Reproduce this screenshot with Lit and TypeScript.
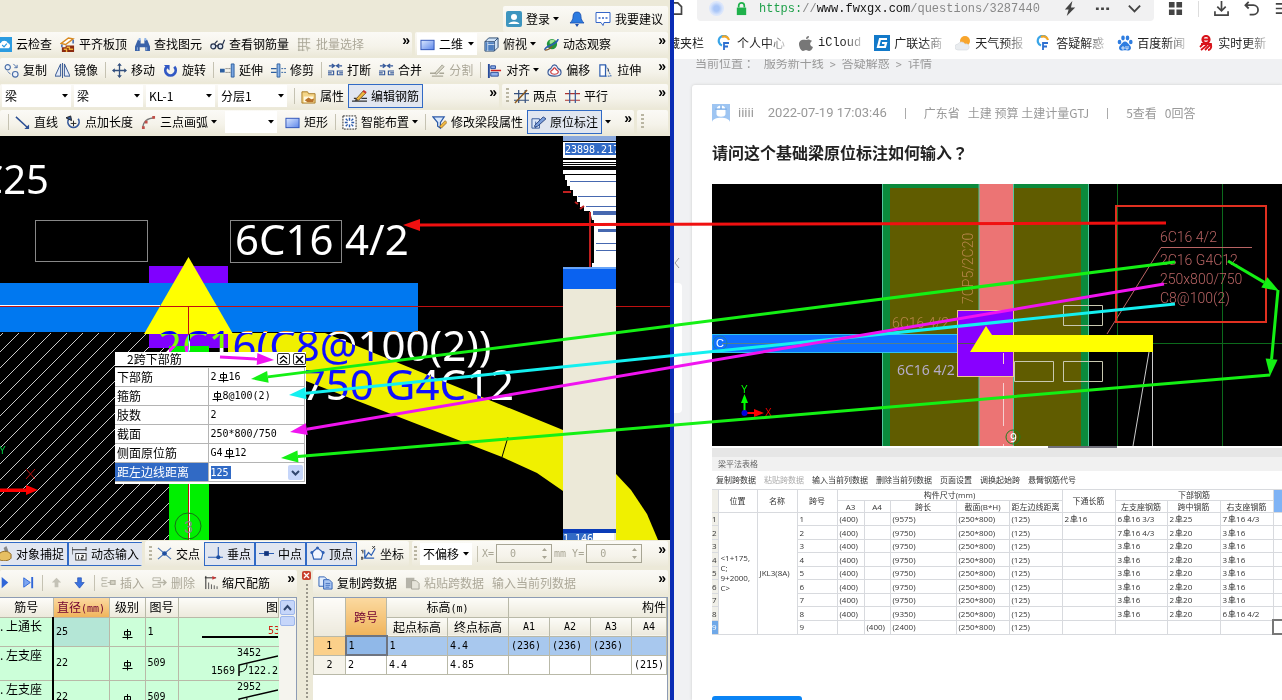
import { LitElement, html, svg, css, nothing } from "lit";
import { customElement } from "lit/decorators.js";
import { classMap } from "lit/directives/class-map.js";

const ICONS: Record<string, any> = {
  user: svg`<rect width="16" height="16" rx="2" fill="#3d95bf"/><circle cx="8" cy="6" r="3" fill="#fff"/><path d="M2.500 13c1-3.500 10-3.500 11 0z" fill="#fff"/>`,
  bell: svg`<path d="M8 1c3 0 4 2 4 5 0 2 1 4 3 6H1c2-2 3-4 3-6 0-3 1-5 4-5z" fill="#2c7be0" stroke="#1b4fae" stroke-width=".8"/><path d="M6 13h4l-2 3z" fill="#1b4fae"/>`,
  talk: svg`<path d="M1 1.500h14v10H9l-1 3-2-3H1z" fill="#fff" stroke="#3566c8"/><path d="M3.500 7h2M7 7h2M10.500 7h2" stroke="#3566c8" stroke-width="1.500"/>`,
  cloud: svg`<rect width="16" height="16" fill="#2b9be0"/><path d="M3 12a3 3 0 0 1 1-5.500 4 4 0 0 1 7.500 0A3 3 0 0 1 12.500 12z" fill="#fff"/><path d="M5.500 8.500l2 2 3-3.500" fill="none" stroke="#2b9be0" stroke-width="1.300"/>`,
  slab: svg`<path d="M1 7l8-6 5 1-8 6z" fill="#fff" stroke="#d98a20" stroke-width="1.500"/><path d="M2 11V8M14 3v4" stroke="#345aa8" stroke-width="1.500"/><path d="M2 11h4v-2h9v7H2z" fill="#8a2a10"/><path d="M7 11h3v2h4M4 13h3v3" stroke="#f2b43c" stroke-width="1.500" fill="none"/>`,
  find: svg`<path d="M3 3h3v4h4V3h3l3 7v5h-5v-4H5v4H0v-5z" fill="#3a62a8"/><path d="M4 1h2v3H4zM10 1h2v3h-2zM2 11h1v3H2zM12 11h1v3h-1z" fill="#8fb4e8"/>`,
  glasses: svg`<circle cx="3.500" cy="10" r="2.600" fill="#dfe8f4" stroke="#23304a" stroke-width="1.300"/><circle cx="11" cy="10" r="2.600" fill="#dfe8f4" stroke="#23304a" stroke-width="1.300"/><path d="M6 9.500h3M5 7l3-3M13.500 8l2-5" stroke="#23304a" stroke-width="1.200"/>`,
  batch: svg`<path d="M1 2h13M1 6h13M1 10h9M1 14h7M2 1v14M6 1v14M10 1v8" stroke="#aaa898" fill="none"/><path d="M9 9l6 3-3 1-1 3z" fill="#bdbbac"/>`,
  rect: svg`<defs><linearGradient id="rg" x2="1" y2="1"><stop stop-color="#dbe8ff"/><stop offset="1" stop-color="#5d86ea"/></linearGradient></defs><rect x="1" y="3.500" width="14" height="10" fill="url(#rg)" stroke="#2c52b8"/>`,
  cube: svg`<path d="M1 5l4-4h10v10l-4 4H1z" fill="#cfe2f6" stroke="#27466e"/><path d="M1 5h10v10M11 5l4-4" fill="none" stroke="#27466e"/><path d="M1.500 5.500h9v9h-9z" fill="#4d7fc0"/><path d="M4 15V5M4 8h7" stroke="#e8f0fa" stroke-width=".8"/>`,
  orbit: svg`<circle cx="8.500" cy="7.500" r="5.500" fill="#22963c"/><path d="M6 4c2-2 4-1 6 0-2 1-4 4-6 3z" fill="#a6e69a"/><path d="M1 14c-1-3 4-4 8-6s6-5 6-6" fill="none" stroke="#2b5fb0" stroke-width="1.600"/><path d="M1 14c3 0 6-2 8-4" stroke="#8a5a2a" fill="none" stroke-width="1.500"/>`,
  copy: svg`<circle cx="4" cy="4.500" r="2.800" fill="#eef3fb" stroke="#4a6ea8" stroke-width="1.200"/><circle cx="12" cy="12" r="3" fill="#eef3fb" stroke="#4a6ea8" stroke-width="1.200"/><path d="M10 1l4 4M14 2v3h-3M4 9l3 3" stroke="#4a6ea8" fill="none"/>`,
  mirror: svg`<path d="M6 1v13H0zM10 1v13h6z" fill="#e4ecfa" stroke="#31538f"/><path d="M8 0v16" stroke="#31538f"/>`,
  move: svg`<path d="M8 1v14M1 8h14" stroke="#34507e" stroke-width="1.400"/><path d="M8 0l2.500 3h-5zM8 16l2.500-3h-5zM0 8l3-2.500v5zM16 8l-3-2.500v5z" fill="#34507e"/>`,
  rotate: svg`<path d="M4 4a5.500 5.500 0 1 0 8 0" fill="none" stroke="#3158c4" stroke-width="3"/><path d="M1 2h6v6z" fill="#3158c4"/>`,
  extend: svg`<path d="M0 6h5v4H0z" fill="#2d5fa0"/><path d="M6 6h5M6 10h5" stroke="#444" stroke-dasharray="1 1"/><path d="M12 1h3v14h-3z" fill="#7aa6e0" stroke="#2d5fa0"/>`,
  trim: svg`<path d="M0 6h6M0 10h6" stroke="#2d5fa0" stroke-width="1.500"/><path d="M6.500 1h3v14h-3z" fill="#8db6ea" stroke="#2d5fa0"/><path d="M11 6h5M11 10h5" stroke="#2d5fa0" stroke-dasharray="2 1"/>`,
  breakk: svg`<path d="M1 3h5M10 3h5M4 1l3 2-3 2M12 1L9 3l3 2" stroke="#34589a" fill="none" stroke-width="1.300"/><path d="M0 8.500h6v4H0M16 8.500h-6v4h6M0 10.500h4M12 10.500h4" fill="none" stroke="#34589a" stroke-width="1.200"/>`,
  split: svg`<path d="M0 11h6M10 11h5M2 14h12" stroke="#aaa898" stroke-width="1.500"/><path d="M5 11l8-9 2 2-8 8z" fill="#d8d6c8" stroke="#a09e8e"/>`,
  align: svg`<path d="M2 1v15" stroke="#274b9a" stroke-width="2"/><path d="M4 3h5v3H4zM4 10h8v4H4z" fill="#8fb0ea" stroke="#274b9a"/><path d="M4 8h11" stroke="#c22" stroke-width="1.500"/>`,
  offset: svg`<path d="M8 2c3 0 3 3 4 4 3 1 3 3 3 4 0 3-3 4-7 4s-7-1-7-4c0-1 0-3 3-4 1-1 1-4 4-4z" fill="#e8eefa" stroke="#3c5c98" stroke-width="1.200"/><path d="M8 5c1 0 1 2 3 3 2 1 1 4-3 4s-5-3-3-4c2-1 2-3 3-3z" fill="#fff" stroke="#c33" stroke-width="1.200"/>`,
  stretch: svg`<path d="M2 2h6v12H2z" fill="#fff" stroke="#3060b0" stroke-width="1.300"/><path d="M8 2l6 12H8" fill="none" stroke="#3060b0" stroke-dasharray="2 1"/><path d="M11 6v3" stroke="#333"/>`,
  props: svg`<path d="M1 3h6l1 2h7v10H1z" fill="#f4d588" stroke="#a87a22"/><path d="M3 8h10v6H3z" fill="#fff8e0"/><path d="M4 12l4-3 3 2 3-1-1 4H7z" fill="#b8722a"/>`,
  edit: svg`<path d="M0 13h16M2 10h3M10 10h6" stroke="#333" stroke-width="1.300"/><path d="M4 11l8-9 3 2-8 8z" fill="#f0b840" stroke="#7a5520"/><path d="M4 11l3 1-4 1z" fill="#333"/><path d="M12 2l3 2" stroke="#c33" stroke-width="2"/>`,
  grid2: svg`<path d="M0 5h16M0 12h16M5 1v14M12 1v14" stroke="#34507e" stroke-width="1.300"/><path d="M1 15L14 1" stroke="#8a5a20" stroke-width="1.500"/>`,
  grid3: svg`<path d="M0 5h16M0 12h16" stroke="#a33" stroke-width="1.300"/><path d="M5 1v14M11 1v14" stroke="#34589a" stroke-width="1.300"/>`,
  line: svg`<path d="M1 2l12 11" stroke="#2c4f94" stroke-width="1.600"/><path d="M15 15v-5l-5 5z" fill="#2c4f94"/>`,
  addlen: svg`<path d="M3 4a6 6 0 1 0 10 0" fill="none" stroke="#34589a" stroke-width="1.800"/><path d="M0 3l5-2 1 5zM8 6v6M5 9h6" stroke="#222" fill="#34589a"/>`,
  arc: svg`<path d="M2 14C2 7 7 3 14 3" fill="none" stroke="#777" stroke-width="1.400"/><path d="M1 12h3v3H1zM4 6h3v3H4zM12 1h3v3h-3z" fill="#c0504a"/>`,
  smart: svg`<rect x="1" y="1" width="14" height="14" fill="#fff" stroke="#222" stroke-dasharray="2 1"/><path d="M8 3v3M8 10v3M3 8h3M10 8h3M4 4l2 2M12 12l-2-2M12 4l-2 2M4 12l2-2" stroke="#2c5aa8" stroke-width="1.500"/>`,
  modify: svg`<path d="M1 2h12L9 8v6l-3-2V8z" fill="#d9e8fc" stroke="#2c5aa8" stroke-width="1.300"/><path d="M8 12l6-6 2 2-6 6z" fill="#f0b840" stroke="#7a5520" stroke-width=".7"/>`,
  label: svg`<path d="M1 4h8v10H1zM5 7v7" fill="#dbe6f8" stroke="#34589a"/><path d="M4 11l9-9 3 2-9 8-3 1z" fill="#7da0dc" stroke="#2b4580"/>`,
  snap: svg`<path d="M7 2l3-2 2 5-3 2z" fill="#888"/><path d="M2 9c2-4 10-5 13 0v4c-2 3-10 4-13 1z" fill="#e6bf62" stroke="#8a6420"/>`,
  dyn: svg`<path d="M0 1v8M15 1v4M0 4h15" stroke="#333" stroke-width="1.200"/><rect x="4" y="8" width="11" height="7" fill="#fff" stroke="#333"/><path d="M7 10v4M10 10h2v2h-2v2h2" stroke="#111" fill="none"/>`,
  cross: svg`<path d="M1 2l14 12M15 2L1 14" stroke="#4f78b8" stroke-width="1.300"/><circle cx="8" cy="8" r="2.500" fill="#1e4fa0"/>`,
  perp: svg`<path d="M0 12h16M11 1v11" stroke="#2d5fb4" stroke-width="1.300"/><circle cx="11" cy="12" r="2.200" fill="#1e4fa0"/>`,
  mid: svg`<path d="M0 8h16" stroke="#2d5fb4" stroke-width="1.300"/><rect x="5.500" y="5.500" width="5" height="5" fill="#12357c"/>`,
  vertex: svg`<path d="M8 2l6 5-2 7H4L2 7z" fill="#f2f6ff" stroke="#2d5fb4" stroke-width="1.300"/><circle cx="8" cy="2" r="1.600" fill="#2d5fb4"/><circle cx="2" cy="7" r="1.600" fill="#2d5fb4"/><circle cx="14" cy="7" r="1.600" fill="#2d5fb4"/>`,
  coord: svg`<path d="M4 4v9h10M4 13l4-6 3 3 4-7" fill="none" stroke="#2d5fb4" stroke-width="1.300"/><path d="M0 4l2 2M2 4v4M12 0l3 3M15 0l-3 3M0 12h2v2H0z" stroke="#333" fill="none"/>`,
  play: svg`<path d="M5 2l7 6-7 6z" fill="#2f66d8"/>`,
  last: svg`<path d="M4 3l7 5-7 5z" fill="#7da6f0" stroke="#2f66d8"/><path d="M13 2v12" stroke="#2f66d8" stroke-width="2"/>`,
  up: svg`<path d="M8 3l5 5h-3v5H6V8H3z" fill="#c4c2b6"/>`,
  down: svg`<path d="M8 14l5-6h-3V3H6v5H3z" fill="#3a72e0" stroke="#2450b0" stroke-width=".7"/>`,
  insert: svg`<path d="M1 3h6M1 12h6M1 3v3h5M1 12V9h5" stroke="#b5b3a5" fill="none"/><path d="M7 8h4M10 6h5v4h-5z" stroke="#b5b3a5" fill="#d8d6c8" stroke-width="1.300"/>`,
  del: svg`<path d="M1 3h8v3H1zM1 10h8v3H1z" stroke="#b5b3a5" fill="none"/><path d="M6 8h9M12 5l3 3-3 3" stroke="#b5b3a5" fill="none" stroke-width="1.500"/>`,
  scale: svg`<path d="M3 1v14M2 3h12" stroke="#222"/><path d="M14 3l-4-2v4z" fill="#c33"/><path d="M6 15v-7M9 15v-5M12 15v-4M15 15v-3" stroke="#555"/>`,
  pages: svg`<path d="M1 2h6l3 3v7H1z" fill="#e4eefc" stroke="#2d5fb4"/><path d="M6 5h6l3 3v7H6z" fill="#a9c6f2" stroke="#2d5fb4"/><path d="M8 9h5M8 11h5M8 13h4" stroke="#2d5fb4" stroke-width=".8"/>`,
  paste: svg`<path d="M1 3h9v11H1z" fill="#b5b3a9"/><path d="M7 6h5l3 3v6H7z" fill="#e6e4da" stroke="#a5a397"/>`,
  serve: svg`<path d="M10.500 2.500a5 5 0 1 0-5.500 8" fill="none" stroke="#39a5e8" stroke-width="2.200"/><path d="M5 2c3-1.500 6 0 7 3" stroke="#f5a623" stroke-width="2.200" fill="none"/><path d="M7 15V8h5M7 11.500h4" stroke="#2d6fd0" stroke-width="1.800" fill="none"/>`,
  apple: svg`<path d="M11 1c0 2-1 3-3 3 0-2 1-3 3-3zM8 5c1 0 2-1 4 0 1 0 2 1 2 1-3 2-2 5 1 6-1 3-3 4-4 4s-2-1-3-1-2 1-3 1c-2 0-4-4-4-7 0-4 4-5 7-4z" fill="#777"/>`,
  gld: svg`<rect width="16" height="16" fill="#1279c9"/><path d="M13 4H6L4 12h7l1-4H8" fill="none" stroke="#fff" stroke-width="2.200"/>`,
  weather: svg`<circle cx="10" cy="6" r="5" fill="#f8a52c"/><path d="M3 15a3 3 0 0 1 0-6 4 4 0 0 1 7 0 3 3 0 0 1 2 6z" fill="#e9ecef" stroke="#d5d9de" stroke-width=".6"/>`,
  baidu: svg`<g fill="#2f7de0"><ellipse cx="2.500" cy="7" rx="1.800" ry="2.300"/><ellipse cx="6" cy="3" rx="1.800" ry="2.400"/><ellipse cx="10.500" cy="3" rx="1.800" ry="2.400"/><ellipse cx="13.800" cy="7" rx="1.800" ry="2.300"/><path d="M8 6.500c2 0 3 2 4.500 3.500 3 3 1 6-2 5.500-2-.4-3-.4-5 0-3 .500-5-2.500-2-5.500C5 8.500 6 6.500 8 6.500z"/></g><path d="M5 12h2v2H5zM9 11v3h2v-3" fill="none" stroke="#fff" stroke-width=".8"/>`,
  yi: svg`<circle cx="8" cy="4.500" r="3.500" fill="none" stroke="#d8131a" stroke-width="2.200"/><path d="M5 4.500h6M3 9h10c1 4-1 6-3 6M9 10l-6 5M12 10l-5 5M5 9l-3 3" fill="none" stroke="#d8131a" stroke-width="1.800"/>`,
  face: svg`<rect width="16" height="16" fill="#9ec5f2"/><path d="M4 5c0-5 8-5 8 0v4c0 3-8 3-8 0zM0 16c1-5 15-5 16 0z" fill="#fff"/><path d="M3 4.500h10M8 1v3" stroke="#6fa6e6" stroke-width="1.200"/>`,
  home: svg`<path d="M0 2h4l4 4v8H0" fill="none" stroke="#444" stroke-width="1.800"/>`,
  bolt: svg`<path d="M10 0L2 9h4l-2 7 9-9H8.500z" fill="#444"/>`,
  dots: svg`<path d="M1 7h3v2.500H1zM6.500 7h3v2.500h-3zM12 7h3v2.500h-3z" fill="#444"/>`,
  chev: svg`<path d="M2 5l6 6 6-6" fill="none" stroke="#444" stroke-width="2"/>`,
  apps: svg`<path d="M1 1h6v6H1zM9 1h6v6H9zM1 9h6v6H1zM9 9h6v6H9z" fill="#444"/>`,
  dl: svg`<path d="M8 0v10M3.500 6L8 10.500 12.500 6M1 11v4h14v-4" fill="none" stroke="#444" stroke-width="1.800"/>`,
  undo: svg`<path d="M5 1L1.500 4.500 5 8M2 4.500h8a4.500 4.500 0 0 1 0 10H6" fill="none" stroke="#444" stroke-width="1.900"/>`,
  menu: svg`<path d="M3 3h14M3 8h14M3 13h14" stroke="#444" stroke-width="1.800"/>`,
  lock: svg`<path d="M3 7h10v8H3z" fill="#1fb14b"/><path d="M5 7V5a3 3 0 0 1 6 0v2" fill="none" stroke="#1fb14b" stroke-width="1.800"/>`,
};

const icon = (name: string) =>
  html`<svg class="ic" viewBox="0 0 16 16" aria-hidden="true">${ICONS[name]}</svg>`;
const caret = html`<svg class="caret" viewBox="0 0 6 4" aria-hidden="true"><path d="M0 0h6L3 3.500z" fill="#000" /></svg>`;
const tool = (name: string, text: string, o: { on?: boolean; off?: boolean; drop?: boolean } = {}) => html`<button
  class=${classMap({ tool: true, on: !!o.on })}
  ?disabled=${!!o.off}
  aria-label=${text || name}
>${name ? icon(name) : nothing}${text ? html`<span>${text}</span>` : nothing}${o.drop ? caret : nothing}</button>`;
const sep = html`<i class="sep"></i>`;
const grip = html`<i class="grip"></i>`;
const more = html`<button class="more" aria-label="更多">»</button>`;
const combo = (label: string, value: string, cls = "", ic = "") => html`<label class="combo ${cls}">${ic ? icon(ic) : nothing}<select aria-label=${label}><option>${value}</option></select>${caret}</label>`;

const rebar = html`<svg class="rb" viewBox="0 0 12 12" aria-label="HRB400"><path d="M6.500 1v10.500M3.500 3.500h6v3.500h-6zM1.500 9.500h10" fill="none" stroke="currentColor" /></svg>`;
const withBar = (s: string) => {
  const [a, b] = s.split("Φ");
  return b === undefined ? a : html`${a}${rebar}${b}`;
};

const POPUP = [
  ["下部筋", "2Φ16"],
  ["箍筋", "Φ8@100(2)"],
  ["肢数", "2"],
  ["截面", "250*800/750"],
  ["侧面原位筋", "G4Φ12"],
];

const BOOKMARKS = [
  ["serve", "个人中心"],
  ["apple", "iCloud"],
  ["gld", "广联达商"],
  ["weather", "天气预报"],
  ["serve", "答疑解惑"],
  ["baidu", "百度新闻"],
  ["yi", "实时更新"],
];

const SPANS = [
  ["(400)", "", "(9575)", "2Φ16", "6Φ16 3/3", "2Φ25", "7Φ16 4/3"],
  ["(400)", "", "(9750)", "", "7Φ16 4/3", "2Φ20", "3Φ16"],
  ["(400)", "", "(9750)", "", "3Φ16", "2Φ20", "3Φ16"],
  ["(400)", "", "(9750)", "", "3Φ16", "2Φ20", "3Φ16"],
  ["(400)", "", "(9750)", "", "3Φ16", "2Φ20", "3Φ16"],
  ["(400)", "", "(9750)", "", "3Φ16", "2Φ20", "3Φ16"],
  ["(400)", "", "(9750)", "", "3Φ16", "2Φ20", "3Φ16"],
  ["(400)", "", "(9350)", "", "3Φ16", "2Φ20", "6Φ16 4/2"],
  ["", "(400)", "(2400)", "", "", "", ""],
];

@customElement("app-root")
export class AppRoot extends LitElement {
  static styles = css`
    :host { display: block; font: 12px/16px "Noto Sans CJK SC", sans-serif; color: #000; }
    * { box-sizing: border-box; }
    button, select, input { font: inherit; color: inherit; border: 0; background: none; margin: 0; padding: 0; border-radius: 0; }
    table { border-collapse: collapse; table-layout: fixed; }
    th { font-weight: 400; }
    .screen { position: relative; display: grid; grid-template-columns: minmax(0, 674fr) minmax(0, 608fr); height: 100vh; min-height: 700px; overflow: hidden; background: #fff; }
    .links { position: absolute; inset: 0; width: 100%; height: 100%; pointer-events: none; }

    .cad { display: flex; flex-direction: column; min-width: 0; min-height: 0; background: #ece9d8; border-right: 4px solid #0a3fd4; border-image: linear-gradient(90deg, #0a2cb4, #0a54e6 50%, #0a2cb4) 1; overflow: hidden; }
    .top { display: flex; justify-content: flex-end; padding: 6px 2px 0 0; height: 32px; }
    .top .account { gap: 10px; background: linear-gradient(#fbfaf6, #f1efe4); padding: 0 5px 0 3px; }
    .account .ic { width: 16px; height: 16px; }
    .row { display: grid; gap: 0 3px; height: 26px; padding: 0 2px 2px 0; }
    .r1 { grid-template-columns: 412fr 253fr; }
    .r2 { grid-template-columns: 1fr; }
    .r3 { grid-template-columns: 499fr 166fr; }
    .r4 { grid-template-columns: 634fr 31fr; }
    .r5 { grid-template-columns: 142fr 264fr 256fr; height: 30px; padding: 1px 2px 4px 0; }
    .bar { display: flex; align-items: center; gap: 8px; min-width: 0; overflow: hidden; white-space: nowrap; background: linear-gradient(#fbfaf6, #f5f3ea 60%, #ece9da); border-radius: 2px; }
    .cut { padding-left: 0; }
    .cut > :first-child { margin-left: -3px; }
    .cut > .on:first-child { margin-left: -7px; }
    .p2 { padding-left: 2px; }
    .p4 { padding-left: 4px; }
    .p9 { padding-left: 9px; }
    .tool { display: flex; align-items: center; gap: 4px; height: 24px; flex: none; line-height: 22px; }
    .tool:disabled { color: #aca899; }
    .on { border: 1px solid #316ac5; background: #e1e6f0; padding: 0 3px; margin: 0 -4px; }
    .ic { width: 15px; height: 15px; flex: none; display: block; }
    .caret { width: 6px; height: 4px; flex: none; margin-left: -1px; }
    .sep { width: 1px; height: 16px; background: #c5c2b2; margin: 0 -2px 0 -1px; flex: none; }
    .grip { width: 3px; height: 16px; margin-right: -3px; flex: none; background: repeating-linear-gradient(#b9b5a2 0 2px, transparent 2px 4px); }
    .more { margin-left: auto; align-self: flex-start; font: bold 14px/16px "Liberation Sans", sans-serif; flex: none; padding-right: 2px; }
    .combo { display: flex; align-items: center; gap: 4px; height: 22px; width: 69px; background: #fff; padding: 0 3px; flex: none; }
    .combo:has(+ .combo) { margin-right: -5px; }
    .combo select { appearance: none; flex: 1; min-width: 0; outline: 0; line-height: 20px; }
    .combo.short { width: 52px; }
    .combo.view { width: 60px; margin-right: -1px; }
    .field { display: flex; align-items: center; gap: 2px; flex: none; color: #a9a695; font: 10px/16px "DejaVu Sans Mono", monospace; }
    .spin { display: flex; align-items: center; width: 56px; height: 19px; border: 1px solid #a7a594; padding-right: 3px; }
    .spin input { flex: 1; width: 20px; text-align: right; padding-right: 10px; appearance: textfield; }
    .spin svg { width: 7px; height: 13px; flex: none; }
    .offsets { gap: 6px; }

    .view3d { position: relative; flex: 1 1 404px; min-height: 0; background: #000; overflow: hidden; }
    .draw { display: block; width: 100%; height: 100%; }
    .big { font: 42px "Noto Sans", sans-serif; fill: #fff; }
    .note { font: 40px "Noto Sans", sans-serif; fill: #fff; }
    .xor { mix-blend-mode: difference; }
    .popup { position: absolute; left: 115px; top: 216px; width: 191px; background: #fff; padding-bottom: 2px; }
    .cap { display: flex; align-items: center; gap: 3px; height: 15px; padding: 0 0 0 12px; border-bottom: 1px solid #000; line-height: 14px; }
    .cap span { flex: 1; }
    .cap button { width: 13px; height: 12px; border: 1px solid #333; border-radius: 2px; display: grid; place-items: center; }
    .cap svg { width: 9px; height: 9px; }
    .popup table { width: 190px; }
    .popup th, .popup td { border: 1px solid #b4b4b4; height: 19px; padding: 0 0 0 2px; text-align: left; line-height: 16px; white-space: nowrap; }
    .popup th { width: 93px; border-left: 0; }
    .popup td { font: 10px/16px "DejaVu Sans Mono", "Noto Sans CJK SC", monospace; }
    .popup .sel { background: #316ac5; color: #fff; }
    .pick { display: flex; align-items: center; padding-right: 1px; }
    .pick select { appearance: none; background: #316ac5; color: #fff; width: 20px; height: 13px; line-height: 13px; }
    .pick svg { width: 15px; height: 15px; margin-left: auto; }
    .rb { width: 12px; height: 12px; vertical-align: -3px; }

    .panes { flex: 0 0 130px; display: grid; grid-template-columns: 297fr 16px 355fr; padding-right: 2px; min-height: 0; overflow: hidden; }
    .pane { display: flex; flex-direction: column; min-width: 0; min-height: 0; overflow: hidden; }
    .pane > .bar { height: 25px; flex: none; margin-bottom: 2px; }
    .p5 { padding-left: 5px; }
    .split { display: flex; flex-direction: column; align-items: flex-end; gap: 4px; padding: 1px 2px 0 0; }
    .shut { width: 9px; height: 9px; background: #c8402c; border-radius: 2px; color: #fff; display: grid; place-items: center; }
    .shut svg { width: 7px; height: 7px; }
    .dots { flex: 1; width: 2px; margin-right: 3px; background: repeating-linear-gradient(#99968a 0 2px, transparent 2px 4px); }
    .sheet { flex: 1; display: flex; border-top: 1px solid #8c9bb4; border-right: 1px solid #8c9bb4; background: #fff; overflow: hidden; align-items: flex-start; }
    .scroll { width: 17px; align-self: stretch; flex: none; padding: 2px 1px; display: grid; align-content: start; gap: 1px; background: #f5f4ee; }
    .scroll button { height: 15px; border: 1px solid #9db6ea; background: #c6d6fa; border-radius: 2px; display: grid; place-items: center; }
    .scroll .thumb { height: 10px; }
    .scroll svg { width: 9px; height: 7px; }
    .bars { width: 100%; flex: 1; min-width: 0; }
    .bars th, .bars td, .spans th, .spans td { border: 1px solid #b9b9a8; border-top: 0; padding: 0 0 0 2px; overflow: hidden; white-space: nowrap; }
    .bars th, .spans th { background: linear-gradient(#fdfcf8, #ece9dc); height: 19px; text-align: center; padding: 0; }
    .bars td { background: #ccffd9; height: 34px; }
    .bars .first td { height: 29px; }
    .bars td:first-child, .bars th:first-child { border-left: 0; }
    .bars td:last-child { border-right: 0; padding: 0; }
    .bars .name { vertical-align: top; border-right: 2px solid #000; padding: 0; }
    .bars .mid { text-align: center; padding: 0; }
    .bars .here { background: #b4e6d6; }
    .bars .hot, .spans .hot { background: linear-gradient(#fbd9a0, #f0b45c); color: #700030; }
    .bars .cutoff { text-align: right; }
    .fig { display: block; }
    .num { font: 10px/14px "DejaVu Sans Mono", monospace; }
    .spans { width: 100%; }
    .spans td { height: 19px; font: 10px/14px "DejaVu Sans Mono", monospace; }
    .spans .lit td { background: #a8c8ee; }
    .spans .lit .cur { background: #90b8e8; border: 2px solid #6e7480; }
    .spans .idx { text-align: center; background: #f5f3ea; padding: 0; }
    .spans .lit .idx { background: #fbd08a; }
    .spans .rt { text-align: right; }

    .web { display: flex; flex-direction: column; min-width: 0; min-height: 0; overflow: hidden; background: #f0f1f3; }
    .chrome { background: #fff; height: 59px; flex: none; overflow: hidden; }
    .address { display: flex; align-items: flex-start; gap: 14px; height: 32px; }
    .url { display: flex; align-items: center; gap: 10px; flex: 1; min-width: 0; height: 21px; padding: 0 12px 4px 12px; background: #f1f1f2; border-radius: 0 0 4px 4px; }
    .link { flex: 1; font: 12px/16px "Liberation Mono", monospace; color: #888; white-space: nowrap; text-decoration: none; }
    .link b { font-weight: 400; color: #111; }
    .link em { font-style: normal; color: #1fa04a; }
    .globe { width: 15px; height: 15px; flex: none; border-radius: 50%; background: radial-gradient(#a9c6f8 25%, #dbe6fb 60%); }
    .acts { display: flex; gap: 17px; align-items: center; }
    .nav { display: flex; gap: 15px; flex: none; padding-top: 1px; }
    .rule { width: 1px; height: 16px; background: #ddd; }
    .home { width: 9px; flex: none; overflow: hidden; padding-top: 1px; }
    .marks { display: flex; gap: 13px; align-items: center; height: 22px; white-space: nowrap; color: #222; }
    .marks a { display: flex; align-items: center; gap: 4px; color: inherit; text-decoration: none; flex: none; }
    .marks .ic { width: 16px; height: 16px; }
    .marks a span { -webkit-mask-image: linear-gradient(90deg, #000 60%, #0004); mask-image: linear-gradient(90deg, #000 60%, #0004); }
    .latin { font: 12px/16px "Liberation Mono", monospace; }
    .marks .fav { width: 30px; overflow: hidden; justify-content: flex-end; }
    .page { flex: 1; min-height: 0; display: grid; grid-template-columns: 18px minmax(0, 1fr); grid-template-rows: 26px minmax(0, 1fr); overflow: hidden; }
    .crumb { grid-column: 1 / -1; padding-left: 21px; margin-top: -6px; height: 20px; color: #999; white-space: pre; line-height: 20px; overflow: hidden; clip-path: inset(6px 0 0 0); }
    .rail { padding-top: 172px; }
    .rail svg { display: block; width: 6px; height: 12px; }
    .rail div { width: 8px; height: 130px; margin-top: 14px; background: #fff; border-radius: 0 4px 4px 0; }
    .card { background: #fff; padding: 18px 0 0 20px; border-radius: 3px 0 0 0; box-shadow: 0 0 3px #ccc; overflow: hidden; display: flex; flex-direction: column; }
    .card > * { flex: none; }
    .meta { display: flex; align-items: center; height: 20px; gap: 8px; color: #999; white-space: nowrap; }
    .meta .ic { width: 18px; height: 18px; }
    .meta i { width: 1px; height: 11px; background: #aaa; margin: 0 10px; }
    .meta .lat { font: 13px/16px Roboto, sans-serif; }
    .meta .who { padding-right: 6px; }
    h1 { font-size: 16px; line-height: 24px; font-weight: 700; color: #222; margin: 17px 0 20px; white-space: nowrap; }
    .ask { font-family: "Noto Sans CJK TC", sans-serif; }
    .photo { display: block; width: 100%; aspect-ratio: 570 / 262; background: #000; }
    .thin { font: 300 14px Roboto, sans-serif; fill: #b96464; }
    .shot { font-size: 8px; line-height: 10px; color: #333; }
    .knob { width: 12%; height: 2px; margin-left: 59%; background: #70707a; }
    .strip { height: 9px; background: #e6e6e6; }
    .tab { height: 14px; padding: 2px 6px; background: #f1f1f1; color: #666; }
    .cmds { display: flex; gap: 8px; height: 18px; align-items: center; padding-left: 4px; white-space: nowrap; }
    .cmds button { line-height: 10px; flex: none; }
    .cmds button:disabled { color: #aaa; }
    .grid { width: 571px; height: 146px; }
    .grid th, .grid td { border: 1px solid #d8dade; padding: 0 0 0 2px; height: 13px; overflow: hidden; white-space: nowrap; font-family: "Open Sans", "Noto Sans CJK SC", sans-serif; line-height: 10px; text-align: left; }
    .grid th { text-align: center; padding: 0; height: 11px; }
    .grid .no { background: #f0efe8; padding: 0; border-left: 0; }
    .grid .now { background: #6fa8e8; color: #fff; }
    .grid .wrap { white-space: normal; }
    .grid .blue { background: #7fb3f5; }
    .grid .box { border: 2px solid #777; border-right: 0; }
    .grid .rb { width: 9px; height: 9px; vertical-align: -1px; }
    .go { width: 90px; height: 32px; margin-top: 61px; background: #0a84f5; border-radius: 3px; color: #fff; }
  `;

  private cadTools() {
    return html`
      <div class="top">
        <div class="bar account">
          ${tool("user", "登录", { drop: true })}${tool("bell", "")}${tool("talk", "我要建议")}
        </div>
      </div>
      <div class="row r1">
        <div class="bar cut">
          ${tool("cloud", "云检查")}${tool("slab", "平齐板顶")}${tool("find", "查找图元")}${tool("glasses", "查看钢筋量")}${tool("batch", "批量选择", { off: true })}${more}
        </div>
        <div class="bar p2">
          ${combo("视图", "二维", "view", "rect")}${tool("cube", "俯视", { drop: true })}${tool("orbit", "动态观察")}${more}
        </div>
      </div>
      <div class="row r2">
        <div class="bar p4">
          ${tool("copy", "复制")}${tool("mirror", "镜像")}${sep}${tool("move", "移动")}${tool("rotate", "旋转")}${sep}${tool("extend", "延伸")}${tool("trim", "修剪")}${sep}${tool("breakk", "打断")}${tool("breakk", "合并")}${tool("split", "分割", { off: true })}${sep}${tool("align", "对齐", { drop: true })}${tool("offset", "偏移")}${tool("stretch", "拉伸")}${more}
        </div>
      </div>
      <div class="row r3">
        <div class="bar p2">
          ${combo("构件类型", "梁")}${combo("构件", "梁")}${combo("名称", "KL-1")}${combo("分层", "分层1")}${sep}${tool("props", "属性")}${tool("edit", "编辑钢筋", { on: true })}${more}
        </div>
        <div class="bar p4">${grip}${tool("grid2", "两点")}${tool("grid3", "平行")}${more}</div>
      </div>
      <div class="row r4">
        <div class="bar p9">
          ${sep}${tool("line", "直线")}${tool("addlen", "点加长度")}${tool("arc", "三点画弧", { drop: true })}${combo("绘制方式", "", "short")}${tool("rect", "矩形")}${sep}${tool("smart", "智能布置", { drop: true })}${sep}${tool("modify", "修改梁段属性")}${tool("label", "原位标注", { on: true })}<button class="tool" aria-label="展开">${caret}</button>${more}
        </div>
        <div class="bar p4">${grip}</div>
      </div>
    `;
  }

  private scene() {
    const rungs = [0, 1, 2, 3, 4];
    return html`
      <svg class="draw" viewBox="0 136 670 404" preserveAspectRatio="xMinYMin slice">
        <defs>
          <pattern id="hatch" width="16" height="16" patternUnits="userSpaceOnUse">
            <path d="M-1 17L17 -1" stroke="#c8c8c8" />
          </pattern>
          <clipPath id="column"><path d="M563 136H616V540H563z" /></clipPath>
        </defs>
        <rect y="136" width="670" height="404" fill="#000" />
        <rect y="333" width="169" height="207" fill="url(#hatch)" />
        <rect x="149" y="266" width="79" height="82" fill="#8000ff" />
        <rect y="283" width="418" height="49" fill="#0078f0" />
        <path d="M228 333H325L563 430V491L537 473L502 457L306 381L228 352z" fill="#f0f000" />
        <path d="M616 474L631 490L647 514L658 540H616z" fill="#f0f000" />
        <path d="M508 437L502 457" stroke="#000" />
        <rect x="169" y="346" width="40" height="194" fill="#00f000" />
        <path d="M188.500 257L144 334H233z" fill="#ff0" />
        <path d="M0 305.500H160" stroke="#fff" />
        <path d="M0 306.500H670M188.500 306V540" stroke="#c01010" />
        <path d="M189.500 334V540" stroke="#fff" />
        <rect x="35.500" y="220.500" width="112" height="41" fill="none" stroke="#888" />
        <rect x="230.500" y="220.500" width="111" height="42" fill="none" stroke="#888" />
        <circle cx="188" cy="526" r="13" fill="none" stroke="#187018" />
        <text x="184" y="533" font-family="Liberation Sans" font-size="16" fill="#888">3</text>
        <text class="note" x="49" y="194" text-anchor="end">C25</text>
        <text class="big" x="235" y="255">6C16</text>
        <text class="big" x="345" y="255">4/2</text>
        <text class="big xor" x="158" y="361">2C16(C8@100(2))</text>
        <text class="big xor" x="514" y="400" text-anchor="end">750 G4C12</text>
        <text x="-1" y="454" font-family="Liberation Sans" font-size="10" fill="#0c4">Y</text>
        <path d="M26 469L35 479M35 469L26 479" stroke="#c01010" />
        <path d="M0 488.500H26V485L38 490L26 495V492H0z" fill="#f00" />
        <g clip-path="url(#column)">
          <path d="M563 136H616V540H563z" fill="#ece9d8" />
          <path d="M563 136H616V268H563z" fill="#000" />
          <path d="M563 136H616V141H563z" fill="#8aa8dc" />
          <path d="M563 142H616V158H563z" fill="#fff" />
          <path d="M565 143H616V155H565z" fill="#316ac5" />
          <text x="565" y="153" font-family="DejaVu Sans Mono" font-size="10" fill="#fff">23898.217</text>
          <path d="M563 160H616V162H563zM563 163h53v1h-53zM563 165h53v1h-53zM563 170h53v4h-53z" fill="#fff" />
          <path d="M565 175H616V267H592V263H594V220H592L590 211H584V207H580V202H577V196H573V190H570V186H567V180H565z" fill="#fff" />
          ${rungs.map((i) => svg`<path d="M${[570, 578, 586, 596, 596][i]} ${[181, 196, 206, 243, 250][i]}.500H616" stroke="#4668b0"/>`)}
          <path d="M593 211h23v4h-23zM598 229h18v3h-18z" fill="#4668b0" />
          <path d="M590 212V267M563 192h8M575 202l3 2M580 209l4-3" stroke="#c02020" stroke-width="2" />
          <path d="M563 267H616V289H563z" fill="#0a62f0" />
          <path d="M563 267H616V269H563z" fill="#68a4f8" />
          <path d="M563 529H616V533H563z" fill="#0a3cb8" />
          <path d="M563 533H593V540H563z" fill="#316ac5" />
          <path d="M593 533H614V540H593z" fill="#fff" />
          <text x="563" y="542" font-family="DejaVu Sans Mono" font-size="10" fill="#fff">1 146</text>
        </g>
      </svg>
      <section class="popup">
        <header class="cap">
          <span>2跨下部筋</span>
          <button aria-label="收起"><svg viewBox="0 0 9 9"><path d="M1 4l3.500-3L8 4M1 8l3.500-3L8 8" fill="none" stroke="#000" stroke-width="1.300" /></svg></button>
          <button aria-label="关闭"><svg viewBox="0 0 9 9"><path d="M1 1l7 7M8 1L1 8" stroke="#000" stroke-width="1.500" /></svg></button>
        </header>
        <table>
          ${POPUP.map(([k, v]) => html`<tr><th scope="row">${k}</th><td>${withBar(v)}</td></tr>`)}
          <tr>
            <th scope="row" class="sel">距左边线距离</th>
            <td><div class="pick"><select aria-label="距左边线距离"><option>125</option></select><svg viewBox="0 0 15 15"><rect width="15" height="15" rx="2" fill="#c6d6fa" /><path d="M4 6l3.500 3.500L11 6" fill="none" stroke="#30466e" stroke-width="2" /></svg></div></td>
          </tr>
        </table>
      </section>
    `;
  }

  private spinner(label: string, unit: string) {
    return html`<label class="field">${label}=<span class="spin"><input type="number" value="0" disabled /><svg viewBox="0 0 7 13"><path d="M1 4l2.500-3L6 4zM1 9l2.500 3L6 9z" fill="#a9a695" /></svg></span>${unit}</label>`;
  }

  private status() {
    return html`<div class="row r5">
      <div class="bar cut">${tool("snap", "对象捕捉", { on: true })}${tool("dyn", "动态输入", { on: true })}</div>
      <div class="bar p4">${grip}${tool("cross", "交点")}${tool("perp", "垂点", { on: true })}${tool("mid", "中点", { on: true })}${tool("vertex", "顶点", { on: true })}${tool("coord", "坐标")}</div>
      <div class="bar p2 offsets">${grip}${combo("偏移", "不偏移", "short")}${sep}${this.spinner("X", "mm")}${this.spinner("Y", "")}${more}</div>
    </div>`;
  }

  private shape(top: string, side: string) {
    return html`<svg class="fig" width="99" height="33" viewBox="0 0 99 33" font-family="DejaVu Sans Mono" font-size="10">
      <path d="M60 29V18L99 9" fill="none" stroke="#000" stroke-width="1.500" />
      <path d="M60 25q8 0 8-8" fill="none" stroke="#000" />
      <text x="58" y="9">${top}</text><text x="32" y="27">${side}</text><text x="69" y="27">122.2</text>
    </svg>`;
  }

  private panes() {
    const row2 = (size: string, top: string) => html`<tr>
      <td class="name">. 左支座</td><td class="num">${size}</td><td class="mid">${rebar}</td><td class="num">509</td><td>${this.shape(top, "1569")}</td>
    </tr>`;
    return html`<div class="panes">
      <section class="pane">
        <div class="bar cut">${tool("play", "")}${tool("last", "")}${sep}${tool("up", "", { off: true })}${tool("down", "")}${sep}${tool("insert", "插入", { off: true })}${tool("del", "删除", { off: true })}${tool("scale", "缩尺配筋")}${more}</div>
        <div class="sheet">
          <table class="bars">
            <colgroup><col width="53" /><col width="56" /><col width="36" /><col width="33" /><col /></colgroup>
            <tr><th>筋号</th><th class="hot">直径<span class="num">(mm)</span></th><th>级别</th><th>图号</th><th class="cutoff">图</th></tr>
            <tr class="first">
              <td class="name">. 上通长</td><td class="num here">25</td><td class="mid">${rebar}</td><td class="num">1</td>
              <td><svg class="fig" width="99" height="28" viewBox="0 0 99 28" font-family="DejaVu Sans Mono" font-size="10"><path d="M23 19H99" stroke="#000" stroke-width="2" /><text x="89" y="16" fill="#d02010">53</text></svg></td>
            </tr>
            ${row2("22", "3452")}${row2("22", "2952")}
          </table>
          <div class="scroll">
            <button aria-label="向上滚动"><svg viewBox="0 0 9 7"><path d="M1 6l3.500-4L8 6" fill="none" stroke="#30466e" stroke-width="2" /></svg></button>
            <button class="thumb" aria-label="滑块"></button>
          </div>
        </div>
      </section>
      <div class="split">
        <button class="shut" aria-label="关闭"><svg viewBox="0 0 7 7"><path d="M1 1l5 5M6 1L1 6" stroke="#fff" stroke-width="1.300" /></svg></button>
        <div class="dots"></div>
      </div>
      <section class="pane">
        <div class="bar p5">${tool("pages", "复制跨数据")}${tool("paste", "粘贴跨数据", { off: true })}${tool("", "输入当前列数据", { off: true })}${more}</div>
        <div class="sheet">
          <table class="spans">
            <colgroup><col width="32" /><col width="41" /><col width="61" /><col width="61" /><col width="41" /><col width="41" /><col width="41" /><col /></colgroup>
            <tr><th rowspan="2"></th><th rowspan="2" class="hot">跨号</th><th colspan="2">标高<span class="num">(m)</span></th><th colspan="4" class="rt">构件</th></tr>
            <tr><th>起点标高</th><th>终点标高</th><th class="num">A1</th><th class="num">A2</th><th class="num">A3</th><th class="num">A4</th></tr>
            <tr class="lit"><td class="idx">1</td><td class="cur">1</td><td>1</td><td>4.4</td><td>(236)</td><td>(236)</td><td>(236)</td><td></td></tr>
            <tr><td class="idx">2</td><td>2</td><td>4.4</td><td>4.85</td><td></td><td></td><td></td><td>(215)</td></tr>
          </table>
        </div>
      </section>
    </div>`;
  }

  private photo() {
    return html`<svg class="photo" viewBox="712 184 570 262">
      <rect x="882" y="184" width="207" height="262" fill="#0a8a3c" />
      <rect x="890" y="188" width="191" height="258" fill="#605c00" />
      <rect x="979" y="184" width="34" height="262" fill="#ec7474" />
      <path d="M882.500 184V446M1088.500 184V446M979 184V446M1013.500 184V446" stroke="#50c8a0" />
      <path d="M1117.500 184V446M1222.500 184V446M1153 343.500H1282" stroke="#0c6a1c" />
      <text transform="translate(973 304) rotate(-90)" class="thin" style="fill:#b8864a">7CP5/2C20</text>
      <text x="892" y="328" class="thin" style="fill:#b8864a">6C16 4/2</text>
      <path d="M712 334.500H958V352.500H712z" fill="#1070ff" stroke="#30c0f0" />
      <path d="M722 343.500H958" stroke="#508090" />
      <rect x="957.500" y="310.500" width="56" height="66" fill="#8800ff" stroke="#f0c890" />
      <path d="M958 343.500H986" stroke="#555" />
      <path d="M970 352L986 326L992 335H1153V352z" fill="#ff0" />
      <path d="M1003.500 353V364M1003.500 383V426M1003.500 444V446" stroke="#f4d0d0" />
      <text x="897" y="375" font-family="Noto Sans" font-size="14" fill="#b4acc8">6C16 4/2</text>
      <path d="M1063.500 305.500H1102.500V325.500H1063.500zM1014.500 361.500H1053.500V381.500H1014.500zM1063.500 361.500H1102.500V381.500H1063.500z" fill="none" stroke="#c8c8b0" />
      <path d="M1152.500 352V446M1149 352L1133 446" stroke="#ccc" fill="none" />
      <path d="M1107 334L1161 247.500H1252" fill="none" stroke="#b96464" />
      <rect x="1116" y="206" width="150" height="116" fill="none" stroke="#e03020" stroke-width="2" />
      <text class="thin" x="1160" y="242">6C16 4/2</text>
      <text class="thin" x="1160" y="265">2C16 G4C12</text>
      <text class="thin" x="1160" y="284">250x800/750</text>
      <text class="thin" x="1160" y="303">C8@100(2)</text>
      <circle cx="720" cy="343" r="7" fill="none" stroke="#2080a0" />
      <text x="716" y="347" font-family="Liberation Sans" font-size="11" fill="#fff">C</text>
      <circle cx="1013" cy="437" r="7" fill="none" stroke="#208020" />
      <text x="1010" y="442" font-family="Noto Sans" font-size="12" fill="#fff">9</text>
      <path d="M744.500 413V400" stroke="#0f0" stroke-width="2" /><path d="M741 403L744.500 394L748 403z" fill="#0f0" />
      <path d="M744 413H756" stroke="#f00" stroke-width="2" /><path d="M754 409L764 413L754 417z" fill="#f00" />
      <circle cx="744.500" cy="413" r="3" fill="#00d" />
      <text x="741" y="393" font-family="Liberation Sans" font-size="10" fill="#0f0">Y</text>
      <text x="765" y="416" font-family="Liberation Sans" font-size="10" fill="#e00">X</text>
    </svg>`;
  }

  private shot() {
    const widths = [6, 39, 40, 40, 27, 26, 66, 53, 53, 53, 52, 53, 53];
    return html`<div class="shot">
      <div class="knob"></div>
      <div class="strip"></div>
      <div class="tab">梁平法表格</div>
      <div class="cmds">
        <button>复制跨数据</button><button disabled>粘贴跨数据</button><button>输入当前列数据</button><button>删除当前列数据</button><button>页面设置</button><button>调换起始跨</button><button>悬臂钢筋代号</button>
      </div>
      <table class="grid">
        <colgroup>${widths.map((w) => html`<col width=${w} />`)}<col /></colgroup>
        <tr>
          <th rowspan="2" class="no"></th><th rowspan="2">位置</th><th rowspan="2">名称</th><th rowspan="2">跨号</th>
          <th colspan="5">构件尺寸(mm)</th><th rowspan="2">下通长筋</th><th colspan="3">下部钢筋</th><th rowspan="2" class="blue"></th>
        </tr>
        <tr><th>A3</th><th>A4</th><th>跨长</th><th>截面(B*H)</th><th>距左边线距离</th><th>左支座钢筋</th><th>跨中钢筋</th><th>右支座钢筋</th></tr>
        ${SPANS.map(
          ([a3, a4, len, thru, l, m, r], i) => html`<tr>
            <td class=${classMap({ no: true, now: i === 8 })}>${i + 1}</td>
            ${i === 0 ? html`<td rowspan="9" class="wrap">&lt;1+175,<br />C;<br />9+2000,<br />C&gt;</td><td rowspan="9">JKL3(8A)</td>` : nothing}
            <td>${i + 1}</td><td>${a3}</td><td>${a4}</td><td>${len}</td><td>(250*800)</td><td>(125)</td>
            <td>${withBar(thru)}</td><td>${withBar(l)}</td><td>${withBar(m)}</td><td>${withBar(r)}</td>
            <td class=${i === 8 ? "box" : ""}></td>
          </tr>`,
        )}
      </table>
    </div>`;
  }

  private web() {
    const gt = html`<span class="num"> &gt; </span>`;
    return html`<main class="web">
      <div class="chrome">
        <div class="address">
          <div class="home">${icon("home")}</div>
          <div class="url">
            <span class="globe"></span>${icon("lock")}
            <a class="link" href="#"><em>https:</em>//<b>www.fwxgx.com</b>/questions/3287440</a>
            <div class="acts">${icon("bolt")}${icon("dots")}${icon("chev")}</div>
          </div>
          <div class="nav">${icon("apps")}<span class="rule"></span>${icon("dl")}${icon("undo")}</div>
          <div class="home">${icon("menu")}</div>
        </div>
        <nav class="marks">
          <a href="#" class="fav">收藏夹栏</a>
          ${BOOKMARKS.map(([ic, t]) => html`<a href="#">${icon(ic)}<span class=${t === "iCloud" ? "latin" : ""}>${t}</span></a>`)}
        </nav>
      </div>
      <div class="page">
        <div class="crumb">当前位置 ：<span class="num"> </span>服务新干线${gt}答疑解惑${gt}详情</div>
        <div class="rail"><svg viewBox="0 0 6 12"><path d="M5 1L1 6l4 5" fill="none" stroke="#999" /></svg><div></div></div>
        <article class="card">
          <div class="meta">
            ${icon("face")}<span class="lat who">iiiii</span><span class="lat">2022-07-19 17:03:46</span><i></i>
            <span>广东省</span><span>土建 预算 土建计量GTJ</span><i></i><span>5查看</span><span>0回答</span>
          </div>
          <h1>请问这个基础梁原位标注如何输入<span class="ask" lang="zh-TW">？</span></h1>
          ${this.photo()}${this.shot()}
          <button class="go">我要回答</button>
        </article>
      </div>
    </main>`;
  }

  private arrow(x1: number, y1: number, x2: number, y2: number, color: string) {
    const len = Math.hypot(x2 - x1, y2 - y1);
    const ux = (x2 - x1) / len, uy = (y2 - y1) / len;
    const bx = x2 - ux * 17, by = y2 - uy * 17;
    return svg`<path d="M${x1} ${y1}L${bx} ${by}" stroke=${color} stroke-width="3"/>
      <path d="M${x2} ${y2}L${bx - uy * 6} ${by + ux * 6}L${bx + uy * 6} ${by - ux * 6}z" fill=${color}/>`;
  }

  render() {
    return html`<div class="screen">
      <section class="cad">
        ${this.cadTools()}
        <div class="view3d">${this.scene()}</div>
        ${this.status()}${this.panes()}
      </section>
      ${this.web()}
      <svg class="links" viewBox="0 0 1282 700" preserveAspectRatio="none">
        ${this.arrow(1166, 223, 403, 225, "#f01010")}
        ${this.arrow(1175, 262, 251, 379, "#14f014")}
        ${this.arrow(1175, 304, 289, 395, "#14f0f0")}
        ${this.arrow(1164, 284, 290, 432, "#f014f0")}
        ${this.arrow(220, 357, 274, 360, "#f014f0")}
        ${this.arrow(1270, 375, 281, 458, "#14f014")}
        ${this.arrow(1228, 261, 1279, 291, "#14f014")}
        ${this.arrow(1278, 290, 1270, 376, "#14f014")}
      </svg>
    </div>`;
  }
}
